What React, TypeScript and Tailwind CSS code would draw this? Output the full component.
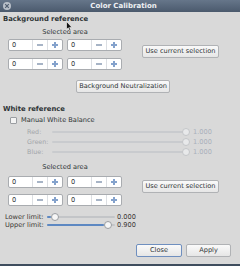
import React from "react";

const FONT = "font-['DejaVu_Sans',sans-serif]";

function Spin() {
  return (
    <div className="flex h-[12px] w-[55px] rounded-[2px] border border-[#a9acb0] bg-white">
      <div className="flex w-[23px] items-center pl-[3px] text-[6.6px] leading-none text-[#2e3436]">
        0
      </div>
      <div className="flex w-[15px] items-center justify-center border-l border-[#dcdfe3]">
        <div className="h-[2px] w-[6px] bg-[#a7b4c6]" />
      </div>
      <div className="relative flex w-[15px] items-center justify-center border-l border-[#dcdfe3]">
        <div className="h-[2px] w-[6px] bg-[#84a2cc]" />
        <div className="absolute h-[6px] w-[2px] bg-[#84a2cc]" />
      </div>
    </div>
  );
}

function Button({
  label,
  className = "",
  focused = false,
}: {
  label: string;
  className?: string;
  focused?: boolean;
}) {
  return (
    <button
      className={`flex h-[13px] items-center justify-center rounded-[2px] border bg-gradient-to-b from-[#fafafa] to-[#e6e6e6] text-[6.6px] leading-none text-[#2e3436] ${
        focused ? "border-[#6f8fbf]" : "border-[#b0b2b5]"
      } ${className}`}
    >
      {label}
    </button>
  );
}

function SelectionBlock({ gap, btnTop }: { gap: string; btnTop: string }) {
  return (
    <div className="flex items-start">
      <div className={`ml-[5px] flex w-[114px] flex-col ${gap}`}>
        <div className="flex gap-[4px]">
          <Spin />
          <Spin />
        </div>
        <div className="flex gap-[4px]">
          <Spin />
          <Spin />
        </div>
      </div>
      <Button label="Use current selection" className={`ml-[20px] w-[77px] ${btnTop}`} />
    </div>
  );
}

function ColorSlider({ label, top }: { label: string; top: string }) {
  return (
    <div className={`flex h-[8px] items-center ${top}`}>
      <span className="ml-[27px] w-[25px] text-[6.4px] leading-none text-[#a3a6aa]">{label}</span>
      <div className="relative ml-[0px] h-[8px] w-[138px]">
        <div className="absolute left-0 right-[2px] top-[3px] h-[2px] rounded-full bg-[#c9cbce]" />
        <div className="absolute right-0 top-0 h-[8px] w-[8px] rounded-full border border-[#c4c6c9] bg-[#e8e9ea]" />
      </div>
      <span className="ml-[3px] text-[6.6px] leading-none text-[#a9b0bb]">1.000</span>
    </div>
  );
}

function LimitSlider({ label, value, pct }: { label: string; value: string; pct: number }) {
  return (
    <div className="flex h-[8px] items-center">
      <span className="ml-[5px] w-[42px] text-[6.6px] leading-none text-[#3a3633]">{label}</span>
      <div className="relative h-[8px] w-[68px]">
        <div className="absolute left-0 right-0 top-[3px] h-[2px] rounded-full bg-[#c3c5c8]" />
        <div
          className="absolute left-0 top-[3px] h-[2px] rounded-full bg-[#5d88c2]"
          style={{ width: `${pct * 60}px` }}
        />
        <div
          className="absolute top-0 h-[8px] w-[8px] rounded-full border border-[#9a9da1] bg-[#f6f6f6]"
          style={{ left: `${pct * 60}px` }}
        />
      </div>
      <span className="ml-[2px] text-[6.6px] leading-none text-[#3a3633]">{value}</span>
    </div>
  );
}

export default function App() {
  return (
    <div
      className={`relative flex h-[266px] w-[240px] flex-col overflow-hidden border-b-2 border-[#3f4d5e] bg-[#d9d9d9] ${FONT} text-[#2e3436]`}
    >
      {/* title bar */}
      <div className="relative flex h-[12px] shrink-0 items-center justify-center bg-gradient-to-b from-[#66768a] to-[#4b5a6d]">
        <div className="absolute left-[3px] top-[2px] flex h-[8px] w-[8px] items-center justify-center rounded-full bg-[#b9c0c9]">
          <svg width="6" height="6" viewBox="0 0 6 6">
            <path d="M1.2 1.2 L4.8 4.8 M4.8 1.2 L1.2 4.8" stroke="#4f5d6f" strokeWidth="1.2" />
          </svg>
        </div>
        <span className="ml-[7px] text-[7px] font-bold leading-none text-[#eef0f3]">Color Calibration</span>
      </div>

      <div className="flex flex-col">
        <div className="ml-[3px] mt-[3px] h-[8px] text-[6.8px] font-bold leading-[8px]">
          Background reference
        </div>
        <div className="ml-[8px] mt-[5px] h-[8px] w-[114px] text-center text-[6.6px] leading-[8px]">
          Selected area
        </div>
        <div className="mt-[3px] ml-[3px]">
          <SelectionBlock gap="gap-[7px]" btnTop="mt-[6px]" />
        </div>
        <div className="mt-[10px] flex">
          <Button label="Background Neutralization" className="ml-[76px] w-[94px]" />
        </div>

        <div className="ml-[3px] mt-[12px] h-[8px] text-[6.8px] font-bold leading-[8px]">
          White reference
        </div>
        <div className="mt-[3px] flex h-[8px] items-center">
          <div className="ml-[10px] h-[7px] w-[7px] rounded-[1px] border border-[#9a9da1] bg-[#f4f4f4]" />
          <span className="ml-[4px] text-[6.6px] leading-none">Manual White Balance</span>
        </div>
        <ColorSlider label="Red:" top="mt-[4px]" />
        <ColorSlider label="Green:" top="mt-[2px]" />
        <ColorSlider label="Blue:" top="mt-[2px]" />

        <div className="ml-[8px] mt-[7px] h-[8px] w-[114px] text-center text-[6.6px] leading-[8px]">
          Selected area
        </div>
        <div className="mt-[5px] ml-[3px]">
          <SelectionBlock gap="gap-[6px]" btnTop="mt-[4px]" />
        </div>

        <div className="mt-[7px]">
          <LimitSlider label="Lower limit:" value="0.000" pct={0.06} />
        </div>
        <LimitSlider label="Upper limit:" value="0.900" pct={0.95} />

        <div className="mt-[15px] flex">
          <Button label="Close" focused className="ml-[136px] w-[46px]" />
          <Button label="Apply" className="ml-[4px] w-[45px]" />
        </div>
      </div>

      {/* mouse pointer */}
      <svg className="absolute left-[66px] top-[21px]" width="7" height="11" viewBox="0 0 7 11">
        <path d="M0.5 0.5 L0.5 8.5 L2.3 6.8 L3.6 9.8 L4.8 9.3 L3.6 6.4 L6 6.4 Z" fill="#111" stroke="#fff" strokeWidth="0.6" />
      </svg>
    </div>
  );
}
